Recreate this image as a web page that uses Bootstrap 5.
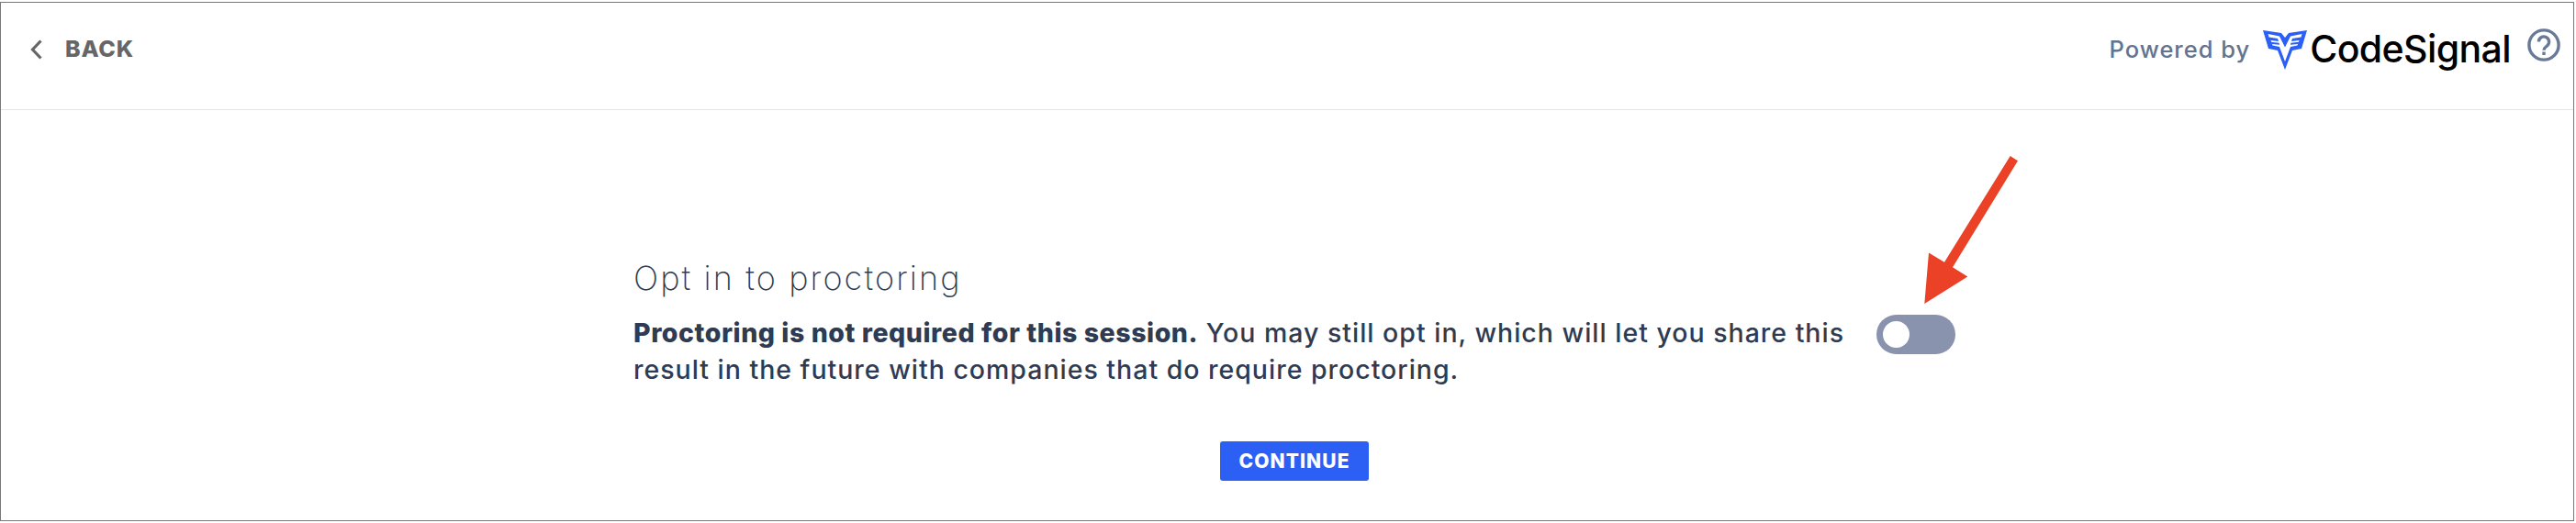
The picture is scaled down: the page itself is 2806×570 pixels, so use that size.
<!doctype html>
<html lang="en">

<head>
  <meta charset="utf-8">
  <meta name="viewport" content="width=device-width, initial-scale=1">
  <title>Opt in to proctoring</title>
  <link href="https://cdn.jsdelivr.net/npm/bootstrap@5.3.3/dist/css/bootstrap.min.css" rel="stylesheet">
  <style>
    body {
      font-family: Inter, "Liberation Sans", sans-serif;
      color: #2e3b52;
      overflow: hidden;
    }

    .page-frame {
      height: 566px;
      width: 2804px;
      margin-top: 2px;
      border: 1px solid #78787a;
    }

    .topbar {
      height: 117px;
      padding: 0 14px 0 32px;
      border-bottom: 1px solid #dfe6f0;
    }

    .back-link,
    .brand-group {
      height: 102px;
    }

    .back-link {
      gap: 25px;
      color: #666;
      font-size: 25px;
      font-weight: 800;
      letter-spacing: .8px;
    }

    .powered {
      color: #64748f;
      font-size: 25.5px;
      font-weight: 500;
      letter-spacing: 1px;
      margin-right: 14px;
    }

    .brand-name {
      color: #000;
      font-size: 41px;
      font-weight: 500;
      letter-spacing: -.6px;
      margin-left: 3px;
      margin-right: 18px;
    }

    .help-icon {
      margin-bottom: 10px;
    }

    .opt-in {
      width: 1440px;
      margin: 158px 0 0 689px;
    }

    .opt-in h1 {
      font-size: 36px;
      line-height: 50px;
      font-weight: 200;
      letter-spacing: 2.1px;
      margin-bottom: 15px;
    }

    .opt-in p {
      font-size: 28.5px;
      line-height: 40px;
      font-weight: 500;
      letter-spacing: .99px;
    }

    .opt-in strong {
      font-weight: 800;
      letter-spacing: .55px;
    }

    .switch {
      width: 86px;
      height: 43px;
      padding: 7px;
      margin-bottom: 37px;
      background: #8a93ad;
    }

    .knob {
      width: 29px;
      height: 29px;
    }

    .continue-btn {
      width: 162px;
      height: 43px;
      margin: 58px 0 0 1328px;
      background: #2c5ff3;
      border-radius: 3px;
      font-size: 21px;
      font-weight: 800;
      letter-spacing: 1.1px;
    }

    .pointer-arrow {
      left: 2090px;
      top: 165px;
    }
  </style>
</head>

<body>
  <div class="page-frame">
    <header class="topbar d-flex justify-content-between align-items-start">
      <a href="#" class="back-link d-flex align-items-center text-decoration-none">
        <svg width="13" height="22" viewBox="0 0 13 22" fill="none" stroke="#666" stroke-width="3.2">
          <path d="M11.5 1.5 2.5 11l9 9.5" />
        </svg>
        <span>BACK</span>
      </a>
      <div class="brand-group d-flex align-items-center">
        <span class="powered">Powered by</span>
        <svg width="48" height="43" viewBox="0 0 48 43">
          <path fill="#2c5ff3" d="M0 0 20 3 24 8 28 3 48 0 42 20 32 22 24 43 16 22 6 20Z" />
          <path fill="#fff" d="M5.5 4 18 6.5 24 18.5 30 6.5 42.5 4 41.5 7.5 32 9 31 12 39.500 11 37.500 16.500 30 18 24 34 18 18 10.500 16.500 8.500 11 17 12 16 9 6.500 7.500Z" />
          <path fill="#2c5ff3" d="M8.5 12.800 17.500 13.800 18 15.800 9.500 15ZM39.500 12.800 30.500 13.800 30 15.800 38.500 15Z" />
        </svg>
        <span class="brand-name">CodeSignal</span>
        <svg class="help-icon" width="36" height="36" viewBox="0 0 36 36" fill="none" stroke="#687a97" stroke-width="3.4">
          <circle cx="18" cy="18" r="16.1" />
          <path d="M12.4 14.5a5.6 5.6 0 1 1 9.2 4.3c-2 1.6-3.6 2.6-3.6 5" />
          <path d="M18 25.5v3.5" />
        </svg>
      </div>
    </header>

    <main>
      <section class="opt-in d-flex justify-content-between align-items-end">
        <div>
          <h1>Opt in to proctoring</h1>
          <p class="mb-0"><strong>Proctoring is not required for this session.</strong> You may still opt in, which will let you share this<br>result in the future with companies that do require proctoring.</p>
        </div>
        <div class="switch rounded-pill" role="switch" aria-checked="false">
          <div class="knob rounded-circle bg-white"></div>
        </div>
      </section>
      <button type="button" class="continue-btn btn btn-primary p-0 border-0 d-block">CONTINUE</button>
    </main>
  </div>

  <svg class="pointer-arrow position-absolute" width="115" height="170" viewBox="2090 165 115 170">
    <path fill="#ea4127" d="M2096.3 331 2101 275.5 2118 285.7 2189.7 170 2198 175.3 2127 291.2 2143.3 301.5Z" />
  </svg>

  <script src="https://cdn.jsdelivr.net/npm/bootstrap@5.3.3/dist/js/bootstrap.bundle.min.js"></script>
</body>

</html>
